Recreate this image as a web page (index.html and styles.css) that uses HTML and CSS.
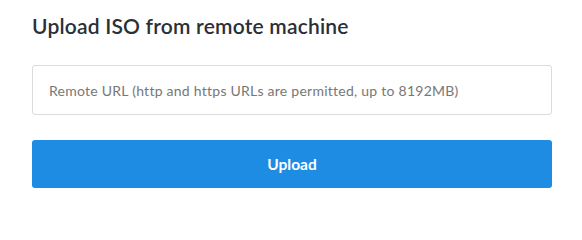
FILE: index.html
```html
<!DOCTYPE html>
<html>
<head>
<meta charset="utf-8">
<link rel="stylesheet" href="styles.css">
</head>
<body>
<div class="panel">
  <h1 class="title">Upload ISO from remote machine</h1>
  <form class="form">
    <input class="url" type="text" placeholder="Remote URL (http and https URLs are permitted, up to 8192MB)">
    <button class="btn" type="button">Upload</button>
  </form>
</div>
</body>
</html>
```
FILE: styles.css
```css
html, body { margin: 0; padding: 0; background: #fff; }
.panel {
  padding: 13px 30px 0 32px;
  font-family: Lato, "Noto Sans", sans-serif;
}
.title {
  margin: 0;
  font-size: 21px;
  font-weight: 600;
  color: #2b2f36;
  line-height: 26px;
  letter-spacing: 0.2px;
}
.form {
  display: flex;
  flex-direction: column;
  gap: 25px;
  margin-top: 26px;
}
.url {
  box-sizing: border-box;
  height: 50px;
  width: 100%;
  border: 1px solid #dcdcdc;
  border-radius: 3px;
  padding: 0 16px;
  font-family: Lato, "Noto Sans", sans-serif;
  font-size: 14px;
  letter-spacing: 0.25px;
  outline: none;
}
.url::placeholder { color: #777; }
.btn {
  height: 48px;
  border: none;
  border-radius: 3px;
  background: #1e8ce3;
  color: #fff;
  font-family: Lato, "Noto Sans", sans-serif;
  font-weight: 700;
  font-size: 15.5px;
  padding-bottom: 1px;
}
```
